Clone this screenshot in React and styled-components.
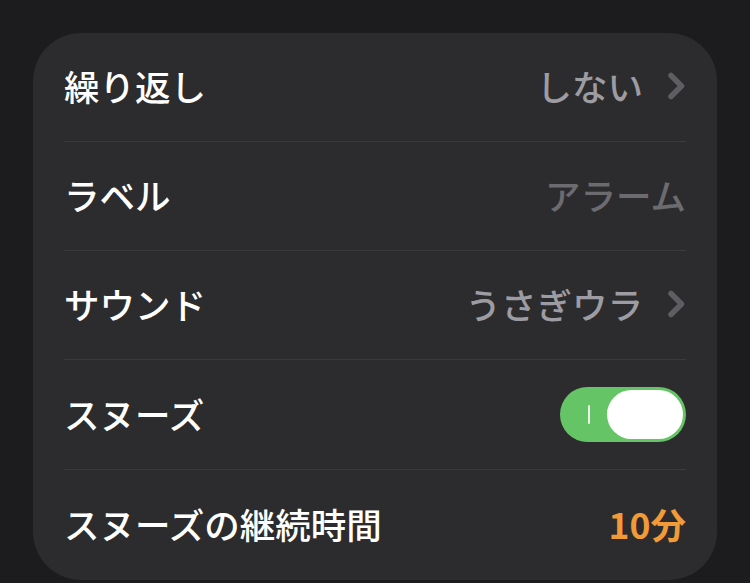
import React from 'react';
import styled, { createGlobalStyle } from 'styled-components';

const GlobalStyle = createGlobalStyle`
  html, body {
    margin: 0;
    padding: 0;
    background: #1c1c1e;
  }

  body {
    font-family: "Noto Sans CJK JP", "Noto Sans", sans-serif;
    -webkit-font-smoothing: antialiased;
  }
`;

const Page = styled.div`
  padding: 33px 33px 3px;
`;

const Card = styled.div`
  background: #2c2c2e;
  border-radius: 48px;
  padding: 0 31px;
`;

const Row = styled.div`
  height: ${({ tall }) => tall ? 109 : 108}px;
  display: flex;
  align-items: center;
  justify-content: space-between;
  border-bottom: 1.5px solid #3b3b3e;

  &:last-child {
    border-bottom: none;
    height: 110px;
  }
`;

const Label = styled.span`
  color: #ffffff;
  font-size: 35.5px;
  font-weight: 500;
  margin-top: -3px;
`;

const Value = styled.span`
  display: flex;
  align-items: center;
  gap: 24px;
  margin-top: -3px;
  font-size: 35.5px;
  font-weight: ${({ bold }) => bold ? 700 : 500};
  color: ${({ color }) => color || '#9d9ca3'};
`;

const Chevron = () => (
  <svg width="19" height="28" viewBox="0 0 19 28">
    <polyline
      points="4,3.5 14.5,14 4,24.5"
      fill="none"
      stroke="#5e5e62"
      strokeWidth="5.5"
      strokeLinecap="round"
      strokeLinejoin="round"
    />
  </svg>
);

const Track = styled.div`
  width: 126px;
  height: 55px;
  border-radius: 28px;
  background: ${({ on }) => on ? '#65c466' : '#39393d'};
  display: flex;
  align-items: center;
  justify-content: space-between;
  padding: 0 3px 0 28px;
  box-sizing: border-box;
`;

const OnMark = styled.span`
  width: 2px;
  height: 19px;
  background: rgba(255, 255, 255, 0.85);
  border-radius: 1px;
`;

const Knob = styled.span`
  width: 76px;
  height: 49px;
  border-radius: 25px;
  background: #ffffff;
`;

const Toggle = ({ on }) => (
  <Track on={on}>
    <OnMark />
    <Knob />
  </Track>
);

export default function App() {
  return (
    <Page>
      <GlobalStyle />
      <Card>
        <Row>
          <Label>繰り返し</Label>
          <Value>しない<Chevron /></Value>
        </Row>
        <Row>
          <Label>ラベル</Label>
          <Value color="#6c6c70">アラーム</Value>
        </Row>
        <Row>
          <Label>サウンド</Label>
          <Value>うさぎウラ<Chevron /></Value>
        </Row>
        <Row tall>
          <Label>スヌーズ</Label>
          <Toggle on />
        </Row>
        <Row>
          <Label>スヌーズの継続時間</Label>
          <Value color="#f19a38" bold>10分</Value>
        </Row>
      </Card>
    </Page>
  );
}
